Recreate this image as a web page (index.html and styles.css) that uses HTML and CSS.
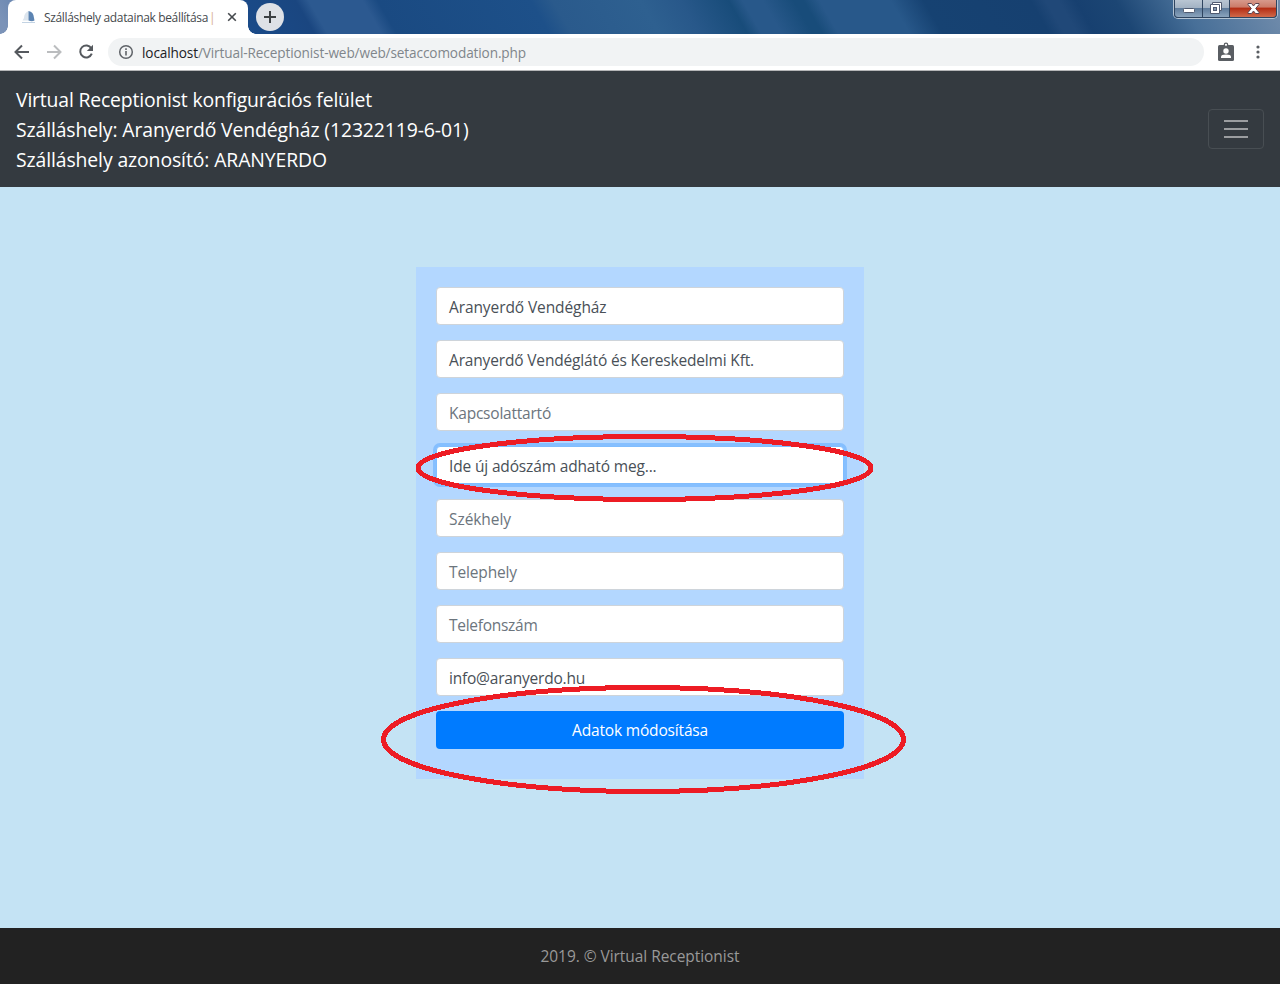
FILE: index.html
```
<!DOCTYPE html>
<html lang="hu">
<head>
<meta charset="utf-8">
<title>Szálláshely adatainak beállítása | Virtual Receptionist</title>
<link rel="stylesheet" href="styles.css">
</head>
<body>
<div class="titlebar">
  <div class="tab">
    <svg class="favicon" width="14" height="14" viewBox="0 0 14 14"><path d="M6.500 1Q2 3 2 8L.5 10.500H6.500Z" fill="#dce5ee"/><path d="M6.500 1Q11.500 1.500 12 8L12.500 10.500Q10 12 6.500 10.500Z" fill="#5c84b2"/><path d="M0 12.500h13" stroke="#c3d3e3"/></svg>
    <span class="tab-title"><span class="fit" data-w="164">Szálláshely adatainak beállítása</span><span class="tab-rest">|</span></span>
    <svg class="tab-close" width="10" height="10" viewBox="0 0 10 10"><path d="M1.200 1.200l7.600 7.600M8.800 1.200L1.200 8.800" stroke="#45494d" stroke-width="1.600"/></svg>
    <span class="tab-foot"></span>
  </div>
  <div class="new-tab"><svg width="14" height="14" viewBox="0 0 14 14"><path d="M7 1v12M1 7h12" stroke="#3c4043" stroke-width="2"/></svg></div>
  <div class="window-buttons">
    <span class="wb wb-min"><svg width="12" height="5" viewBox="0 0 12 5"><rect x=".5" y=".5" width="11" height="4" rx="1" fill="#fff" stroke="#505a70"/></svg></span>
    <span class="wb wb-max"><svg width="12" height="12" viewBox="0 0 12 12"><path d="M2.500 .5h9v8h-2v3h-9v-9h2z" fill="#fff" stroke="#505a70"/><path d="M2.500 2.500h7v6.500" fill="none" stroke="#505a70"/><rect x="3.500" y="5.500" width="3" height="3" fill="#8297ae" stroke="#505a70"/></svg></span>
    <span class="wb wb-close"><svg width="13" height="11" viewBox="0 0 13 11"><path d="M1 .5h3.500l2 2.500 2-2.500H12v1L8.700 5.500 12 9.500v1H8.500l-2-2.500-2 2.500H1v-1l3.300-4L1 1.500z" fill="#fff" stroke="#5b4450"/></svg></span>
  </div>
</div>
<div class="toolbar">
  <svg class="nav-icon" width="16" height="16" viewBox="0 0 16 16"><path d="M15 8H2M8 1.500L1.500 8 8 14.500" fill="none" stroke="#55595e" stroke-width="2"/></svg>
  <svg class="nav-icon" width="16" height="16" viewBox="0 0 16 16"><path d="M1 8h13M8 1.500L14.500 8 8 14.500" fill="none" stroke="#bbbdbf" stroke-width="2"/></svg>
  <svg class="nav-icon" width="16" height="16" viewBox="0 0 16 16"><path d="M13.300 4.200A6 6 0 1 0 13.800 9.700" fill="none" stroke="#55595e" stroke-width="2"/><path d="M15 .8V7H8.800z" fill="#55595e"/></svg>
  <div class="address">
    <svg width="16" height="16" viewBox="0 0 16 16"><circle cx="8" cy="8" r="6.300" fill="none" stroke="#5f6368" stroke-width="1.500"/><path d="M8 7v4.500M8 4.300v1.600" stroke="#5f6368" stroke-width="1.600"/></svg>
    <span class="fit" data-w="384"><span class="host">localhost</span>/Virtual-Receptionist-web/web/setaccomodation.php</span>
  </div>
  <svg class="badge" width="16" height="20" viewBox="0 0 16 20"><path d="M1.500 3h13q1.500 0 1.500 1.500v13q0 1.500-1.500 1.500h-13Q0 19 0 17.500v-13Q0 3 1.500 3z" fill="#5a5e63"/><circle cx="8" cy="2.800" r="1.700" fill="#fff" stroke="#5a5e63" stroke-width="1.200"/><circle cx="8" cy="9" r="2.700" fill="#fff"/><path d="M3 16v-1.300Q3 12.500 8 12.500t5 2.200V16z" fill="#fff"/></svg>
  <svg width="4" height="14" viewBox="0 0 4 14"><g fill="#5a5e63"><circle cx="2" cy="2" r="1.600"/><circle cx="2" cy="7" r="1.600"/><circle cx="2" cy="12" r="1.600"/></g></svg>
</div>
<header class="navbar">
  <div class="brand">
    <div><span class="fit" data-w="356">Virtual Receptionist konfigurációs felület</span></div>
    <div><span class="fit" data-w="452.500">Szálláshely: Aranyerdő Vendégház (12322119-6-01)</span></div>
    <div><span class="fit" data-w="311">Szálláshely azonosító: ARANYERDO</span></div>
  </div>
  <div class="toggler"><svg width="30" height="30" viewBox="0 0 30 30"><path d="M3 7h24M3 15h24M3 23h24" stroke="#9b9da0" stroke-width="2"/></svg></div>
</header>
<main class="content">
  <form class="card">
    <div class="field"><span class="fit" data-w="157.500">Aranyerdő Vendégház</span></div>
    <div class="field"><span class="fit" data-w="305">Aranyerdő Vendéglátó és Kereskedelmi Kft.</span></div>
    <div class="field empty"><span class="fit" data-w="102">Kapcsolattartó</span></div>
    <div class="field focused"><span class="fit" data-w="207.500">Ide új adószám adható meg...</span></div>
    <div class="field empty"><span class="fit" data-w="62">Székhely</span></div>
    <div class="field empty"><span class="fit" data-w="68">Telephely</span></div>
    <div class="field empty"><span class="fit" data-w="88.500">Telefonszám</span></div>
    <div class="field"><span class="fit" data-w="136">info@aranyerdo.hu</span></div>
    <div class="submit"><span class="fit" data-w="136">Adatok módosítása</span></div>
  </form>
</main>
<footer class="footer"><span class="fit" data-w="199">2019. © Virtual Receptionist</span></footer>
<svg class="marks" width="1280" height="984" viewBox="0 0 1280 984" fill="none" stroke="#ed1c24" stroke-width="5" shape-rendering="crispEdges"><ellipse cx="644.500" cy="468" rx="226.500" ry="31.500"/><ellipse cx="643.500" cy="739.500" rx="260" ry="52"/></svg>
<script src="fit.js"></script>
</body>
</html>
```
FILE: fit.js
```
// Spread the letters of each label so that it fills its intended width.
document.querySelectorAll('.fit').forEach(function (el) {
  var width = el.getBoundingClientRect().width;
  var count = el.textContent.length;
  el.style.letterSpacing = (parseFloat(el.dataset.w) - width) / count + 'px';
});
```
FILE: styles.css
```
* { box-sizing: border-box; }
body {
  margin: 0;
  height: 984px;
  display: flex;
  flex-direction: column;
  position: relative;
  overflow: hidden;
  background: #c4e3f4;
  font-family: "Open Sans", "Noto Sans", sans-serif;
  font-size: 15.500px;
}
svg { display: block; flex: none; }
.fit { white-space: nowrap; }

.titlebar {
  height: 34px;
  flex: none;
  display: flex;
  position: relative;
  overflow: hidden;
  isolation: isolate;
  padding-left: 8px;
}
.titlebar::before {
  content: "";
  position: absolute;
  inset: 0 -40px;
  z-index: -1;
  transform: skewX(30deg);
  background: linear-gradient(to right, #7b93b8 40px, #6d89b2 60px, #1a4a88 286px, #1a4680 345px, #2c5990 358px, #2c5990 412px, #1a4a82 427px, #1d5089 580px, #2a5a8c 602px, #2e6090 690px, #28588a 730px, #184c7a 778px, #28588a 792px, #28588a 812px, #184c7a 843px, #184c7a 853px, #28588a 869px, #28588a 940px, #164272 973px, #164070 1080px, #204878 1095px, #204878 1108px, #174070 1125px, #1c4674 1165px, #476f98 1230px, #6e8aaa 1320px);
}
.tab {
  width: 240px;
  display: flex;
  align-items: center;
  position: relative;
  padding: 0 11px 0 14px;
  border-radius: 8px 8px 0 0;
  background: #fff;
}
.tab-foot {
  position: absolute;
  left: 100%;
  bottom: 0;
  width: 8px;
  height: 8px;
  background: radial-gradient(circle at 100% 0, transparent 7.500px, #fff 8px);
}
.tab::before {
  content: "";
  position: absolute;
  right: 100%;
  bottom: 0;
  width: 8px;
  height: 8px;
  background: radial-gradient(circle at 0 0, transparent 7.500px, #fff 8px);
}
.tab-title {
  flex: 1;
  margin-left: 8px;
  font-size: 12px;
  white-space: nowrap;
  color: #45494d;
}
.tab-rest { margin-left: 1px; color: #d8b090; }
.new-tab {
  width: 28px;
  height: 28px;
  margin: 3px 0 0 8px;
  border-radius: 50%;
  display: grid;
  place-items: center;
  background: #dee1e6;
}
.window-buttons {
  display: flex;
  width: 105px;
  height: 19px;
  margin: 0 2px 0 auto;
  border: 1px solid #b4c4d4;
  border-top: 0;
  border-radius: 0 0 5px 5px;
}
.wb {
  display: grid;
  place-items: center;
  border: 1px solid #2f4560;
  border-top: 0;
  background: linear-gradient(#b9c6d3 0, #a3b3c4 45%, #5f7c9c 50%, #8ba4bd);
}
.wb-min { width: 29px; border-radius: 0 0 0 4px; padding-top: 4px; }
.wb-max { width: 27px; border-left: 0; padding-bottom: 1px; }
.wb-close { flex: 1; border-left: 0; border-radius: 0 0 4px; padding-bottom: 1px; background: linear-gradient(#d79a8c 0, #cc7c6a 40%, #b52f16 50%, #d0694a); }

.toolbar {
  height: 37px;
  flex: none;
  display: flex;
  align-items: center;
  padding: 0 20px 0 14px;
  border-bottom: 1px solid #b5b6b8;
  background: #fff;
}
.nav-icon { margin-right: 16px; }
.address {
  flex: 1;
  height: 28px;
  display: flex;
  align-items: center;
  gap: 8px;
  margin-left: -2px;
  padding-left: 10px;
  border-radius: 14px;
  background: #f1f3f4;
  color: #80868b;
  font-size: 13.600px;
}
.host { color: #202124; }
.badge { margin: 0 22px 0 14px; }

.navbar {
  height: 116px;
  flex: none;
  display: flex;
  align-items: center;
  justify-content: space-between;
  padding: 0 16px;
  background: #343a40;
}
.brand { padding-top: 2px; color: #fff; font-size: 19.400px; line-height: 30px; }
.toggler {
  width: 56px;
  height: 40px;
  display: grid;
  place-items: center;
  border: 1px solid #484e53;
  border-radius: 4px;
}

.content { flex: 1; display: flex; justify-content: center; align-items: flex-start; padding-top: 80px; }
.card {
  width: 448px;
  height: 512px;
  display: flex;
  flex-direction: column;
  gap: 15px;
  padding: 20px;
  background: #b3d7ff;
}
.field {
  height: 38px;
  padding: 2px 12px 0;
  line-height: 35px;
  border: 1px solid #ced4da;
  border-radius: 4px;
  background: #fff;
  color: #495057;
}
.empty { color: #6c757d; }
.focused { border-color: #80bdff; box-shadow: 0 0 0 3px #85bfff; }
.submit {
  height: 38px;
  line-height: 38px;
  border-radius: 4px;
  background: #007bff;
  color: #fff;
  text-align: center;
}
.footer {
  height: 56px;
  flex: none;
  line-height: 56px;
  text-align: center;
  background: #222;
  color: #999;
}
.marks { position: absolute; left: 0; top: 0; pointer-events: none; }
```
